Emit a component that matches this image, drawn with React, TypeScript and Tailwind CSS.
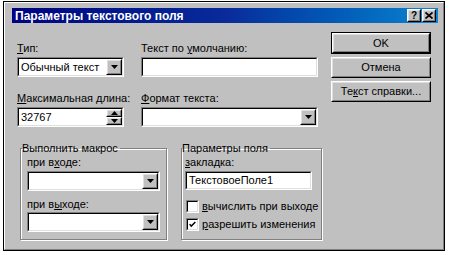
import type { ReactNode } from 'react';

const FONT = { fontFamily: '"Liberation Sans", Arial, sans-serif' };

function Raised({ className = '', children }: { className?: string; children?: ReactNode }) {
  return (
    <div className={`border border-t-white border-l-white border-b-black border-r-black bg-[#c0c0c0] ${className}`}>
      <div className="flex h-full w-full items-center justify-center border border-t-[#dfdfdf] border-l-[#dfdfdf] border-b-[#808080] border-r-[#808080]">
        {children}
      </div>
    </div>
  );
}

function Sunken({ className = '', children }: { className?: string; children?: ReactNode }) {
  return (
    <div className={`border border-t-[#808080] border-l-[#808080] border-b-white border-r-white ${className}`}>
      <div className="flex h-full w-full items-center border border-t-black border-l-black border-b-[#dfdfdf] border-r-[#dfdfdf] bg-white">
        {children}
      </div>
    </div>
  );
}

function Arrow({ up = false }: { up?: boolean }) {
  return (
    <svg width="7" height="4" viewBox="0 0 7 4">
      <polygon points={up ? '3.5,0 7,4 0,4' : '0,0 7,0 3.5,4'} fill="#000" />
    </svg>
  );
}

function Combo({ className = '', value = '' }: { className?: string; value?: string }) {
  return (
    <Sunken className={className}>
      <span className="flex-1 truncate pl-[2px] text-[11px] leading-none text-black">{value}</span>
      <Raised className="h-full w-[16px]">
        <Arrow />
      </Raised>
    </Sunken>
  );
}

function Label({ pre = '', u, post = '' }: { pre?: string; u: string; post?: string }) {
  return (
    <div className="h-[13px] whitespace-nowrap text-[11px] leading-[13px] text-black">
      {pre}
      <span className="underline underline-offset-1">{u}</span>
      {post}
    </div>
  );
}

function Check({ checked = false }: { checked?: boolean }) {
  return (
    <Sunken className="h-[13px] w-[13px] shrink-0">
      {checked && (
        <svg width="11" height="11" viewBox="0 0 11 11" className="block">
          <path d="M2 5 L4 7.5 L9 2.5" stroke="#000" strokeWidth="1.8" fill="none" />
        </svg>
      )}
    </Sunken>
  );
}

export default function App() {
  return (
    <div className="h-[255px] w-[457px] bg-white pt-[1px] pl-[3px]" style={FONT}>
      <div className="h-[250px] w-[442px] border border-black">
        <div className="flex h-full flex-col border border-t-white border-l-white border-b-[#808080] border-r-[#808080] bg-[#c0c0c0]">
          {/* title bar */}
          <div className="ml-[7px] mr-[5px] mt-[5px] flex h-[15px] items-center justify-between bg-gradient-to-r from-[#000080] via-[#0a2a9a] to-[#1084d0] pl-[3px] pr-[2px]">
            <span className="text-[12px] font-bold leading-none text-white">Параметры текстового поля</span>
            <div className="flex gap-[1px]">
              <Raised className="h-[13px] w-[14px]">
                <span className="text-[10px] font-bold leading-none text-black">?</span>
              </Raised>
              <Raised className="h-[13px] w-[14px]">
                <svg width="8" height="7" viewBox="0 0 8 7">
                  <path d="M0.5 0.5 L7.5 6.5 M7.5 0.5 L0.5 6.5" stroke="#000" strokeWidth="1.7" />
                </svg>
              </Raised>
            </div>
          </div>

          {/* body */}
          <div className="flex pl-[12px]">
            <div className="flex w-[303px] flex-col">
              <div className="mt-[19px] flex gap-[17px]">
                <div className="flex w-[107px] flex-col gap-[2px]">
                  <Label u="Т" post="ип:" />
                  <Combo className="h-[20px] w-[107px]" value="Обычный текст" />
                </div>
                <div className="flex w-[177px] flex-col gap-[2px]">
                  <Label pre="Текст по " u="у" post="молчанию:" />
                  <Sunken className="h-[20px] w-[177px]" />
                </div>
              </div>

              <div className="mt-[15px] flex gap-[17px]">
                <div className="flex w-[107px] flex-col gap-[2px]">
                  <Label u="М" post="аксимальная длина:" />
                  <Sunken className="h-[20px] w-[107px]">
                    <span className="flex-1 pl-[2px] text-[11px] leading-none text-black">32767</span>
                    <div className="flex h-full w-[16px] flex-col">
                      <Raised className="h-1/2 w-full">
                        <Arrow up />
                      </Raised>
                      <Raised className="h-1/2 w-full">
                        <Arrow />
                      </Raised>
                    </div>
                  </Sunken>
                </div>
                <div className="flex w-[177px] flex-col gap-[2px]">
                  <Label u="Ф" post="ормат текста:" />
                  <Combo className="h-[20px] w-[177px]" />
                </div>
              </div>

              <div className="mt-[15px] ml-[3px] flex gap-[14px]">
                <fieldset className="h-[98px] w-[149px] border border-[#808080] px-[6px] shadow-[1px_1px_0_#fff,inset_1px_1px_0_#fff]">
                  <legend className="-ml-[5px] pr-[2px] text-[11px] leading-[13px] text-black">Выполнить макрос</legend>
                  <div className="mt-[1px] flex flex-col">
                    <Label pre="при в" u="х" post="оде:" />
                    <Combo className="mt-[2px] h-[20px] w-[133px]" />
                    <div className="mt-[7px]">
                      <Label pre="при в" u="ы" post="ходе:" />
                    </div>
                    <Combo className="mt-[1px] h-[20px] w-[133px]" />
                  </div>
                </fieldset>
                <fieldset className="h-[98px] w-[138px] border border-[#808080] px-[3px] shadow-[1px_1px_0_#fff,inset_1px_1px_0_#fff]">
                  <legend className="-ml-[3px] pr-[2px] text-[11px] leading-[13px] text-black">Параметры поля</legend>
                  <div className="mt-[1px] flex flex-col">
                    <Label u="з" post="акладка:" />
                    <Sunken className="mt-[2px] h-[19px] w-[127px]">
                      <span className="pl-[2px] text-[11px] leading-none text-black">ТекстовоеПоле1</span>
                    </Sunken>
                    <div className="mt-[10px] flex items-center gap-[3px] pl-[1px]">
                      <Check />
                      <Label u="в" post="ычислить при выходе" />
                    </div>
                    <div className="mt-[5px] flex items-center gap-[3px] pl-[1px]">
                      <Check checked />
                      <Label u="р" post="азрешить изменения" />
                    </div>
                  </div>
                </fieldset>
              </div>
            </div>

            {/* buttons */}
            <div className="ml-[11px] mt-[9px] flex w-[100px] flex-col gap-[3px]">
              <div className="h-[22px] w-[100px] border border-black">
                <Raised className="h-full w-full">
                  <span className="text-[11px] leading-none text-black">OK</span>
                </Raised>
              </div>
              <Raised className="h-[21px] w-[100px]">
                <span className="text-[11px] leading-none text-black">Отмена</span>
              </Raised>
              <Raised className="h-[21px] w-[100px]">
                <span className="text-[11px] leading-none text-black">
                  Те<span className="underline underline-offset-1">к</span>ст справки...
                </span>
              </Raised>
            </div>
          </div>
        </div>
      </div>
    </div>
  );
}
